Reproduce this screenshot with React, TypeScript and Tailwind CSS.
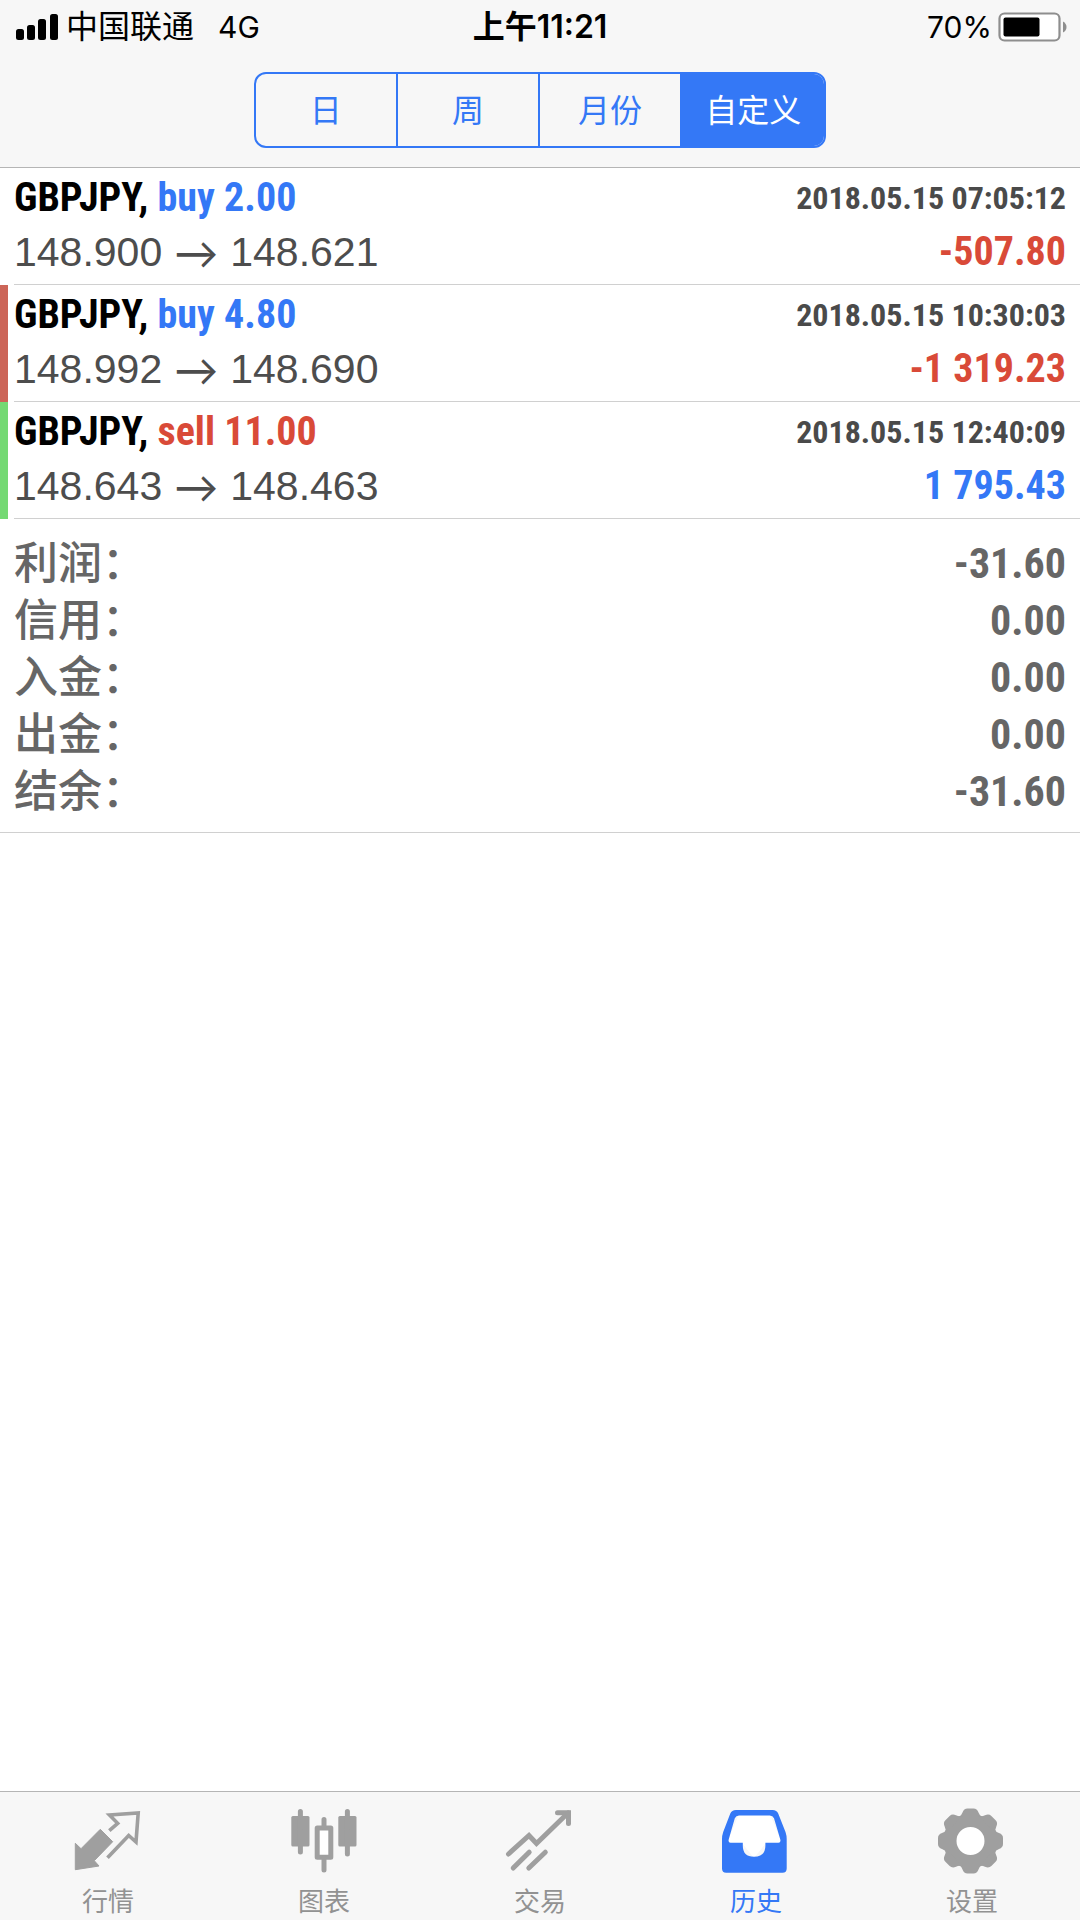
import React, { useState } from 'react';

type Deal = {
  symbol: string;
  side: 'buy' | 'sell';
  volume: string;
  open: string;
  close: string;
  time: string;
  profit: string;
  marker?: 'sl' | 'tp';
};

const deals: Deal[] = [
  { symbol: 'GBPJPY', side: 'buy', volume: '2.00', open: '148.900', close: '148.621', time: '2018.05.15 07:05:12', profit: '-507.80' },
  { symbol: 'GBPJPY', side: 'buy', volume: '4.80', open: '148.992', close: '148.690', time: '2018.05.15 10:30:03', profit: '-1 319.23', marker: 'sl' },
  { symbol: 'GBPJPY', side: 'sell', volume: '11.00', open: '148.643', close: '148.463', time: '2018.05.15 12:40:09', profit: '1 795.43', marker: 'tp' },
];

const summary = [
  { label: '利润', value: '-31.60' },
  { label: '信用', value: '0.00' },
  { label: '入金', value: '0.00' },
  { label: '出金', value: '0.00' },
  { label: '结余', value: '-31.60' },
];

const periods = ['日', '周', '月份', '自定义'];

const narrow = "font-['Roboto_Condensed','Liberation_Sans_Narrow','Noto_Sans_CJK_SC',sans-serif] font-bold";

const QuotesIcon = () => (
  <svg className="w-[72px] h-[66px]" viewBox="0 0 72 66" fill="none" aria-hidden="true">
    <path d="M28.3 21.3L40.7 33.7L22.3 52.7L27 58L3.3 61.7V35.3L9 40.7Z" fill="currentColor" stroke="currentColor" strokeWidth="1" strokeLinejoin="round" />
    <path d="M35.5 49.8L56.7 27.5L64 34L66.2 5L37.5 7L45.7 15.3L37.3 22.7" stroke="currentColor" strokeWidth="3.6" />
  </svg>
);

const ChartIcon = () => (
  <svg className="w-[72px] h-[66px]" viewBox="0 0 72 66" fill="none" aria-hidden="true">
    <g fill="currentColor">
      <rect x="3.3" y="8" width="18.2" height="30.5" rx="1.5" />
      <rect x="50.3" y="8" width="18.2" height="30.5" rx="1.5" />
    </g>
    <rect x="29.2" y="19.9" width="13.6" height="29.4" fill="white" stroke="currentColor" strokeWidth="5" strokeLinejoin="round" />
    <path d="M12.4 3.5V44M59.4 3.5V46M36 11.5V19M36 50V62" stroke="currentColor" strokeWidth="5" strokeLinecap="round" />
  </svg>
);

const TradeIcon = () => (
  <svg className="w-[72px] h-[66px]" viewBox="0 0 72 66" fill="none" stroke="currentColor" strokeWidth="5" strokeLinecap="round" aria-hidden="true">
    <path d="M4.5 46L25 27.5L32.5 35.5L64.2 4.8" />
    <path d="M53.5 4.8H64.5V15.5M9.2 60L25.2 44.2M24.8 60L41.3 44.2" />
  </svg>
);

const HistoryIcon = () => (
  <svg className="w-[72px] h-[66px]" viewBox="0 0 72 66" fill="currentColor" aria-hidden="true">
    <path d="M19 6H50L62 35H46L34 50L22 35H7Z" fill="white" />
    <path
      fillRule="evenodd"
      d="M16 2H52.5Q56.8 2 58.2 5.5L65.5 24Q66.7 27.5 66.7 31V60.5Q66.7 64.7 62.5 64.7H6.2Q2 64.7 2 60.5V31Q2 27.5 3.2 24L10.3 5.5Q11.7 2 16 2ZM19 7.5Q16 7.5 14.8 10.3L8.7 31.5Q8 34.7 10.5 34.7H22.8V37.5Q22.8 48.8 34 48.8Q45.4 48.8 45.4 37.5V34.7H58.5Q61 34.7 60.3 31.5L54 10.3Q52.8 7.5 49.8 7.5Z"
    />
  </svg>
);

const GearIcon = () => (
  <svg className="w-[72px] h-[66px]" viewBox="0 0 72 66" aria-hidden="true">
    <g transform="translate(34.5 33)">
      <circle r="20.5" fill="white" stroke="currentColor" strokeWidth="13" />
      {[0, 45, 90, 135, 180, 225, 270, 315].map((angle) => (
        <path
          key={angle}
          transform={`rotate(${angle})`}
          fill="currentColor"
          d="M-12 -23.5Q-9 -25.5 -8 -28.5Q-6.6 -32.5 -3 -32.5H3Q6.6 -32.5 8 -28.5Q9 -25.5 12 -23.5Z"
        />
      ))}
    </g>
  </svg>
);

const tabs = [
  { label: '行情', Icon: QuotesIcon },
  { label: '图表', Icon: ChartIcon },
  { label: '交易', Icon: TradeIcon },
  { label: '历史', Icon: HistoryIcon },
  { label: '设置', Icon: GearIcon },
];

const StatusBar: React.FC = () => (
  <div className="grid grid-cols-[1fr_auto_1fr] items-center h-[54px] px-4 text-[32px] text-black">
    <div className="flex items-center">
      <svg className="w-[42px] h-[26px]" viewBox="0 0 42 26" aria-hidden="true">
        <rect x="0" y="15" width="8" height="11" rx="2.5" />
        <rect x="11" y="11" width="8" height="15" rx="2.5" />
        <rect x="22" y="5" width="8" height="21" rx="2.5" />
        <rect x="34" y="0" width="8" height="26" rx="2.5" />
      </svg>
      <span className="ml-2">中国联通</span>
      <span className="ml-6 text-[30px]">4G</span>
    </div>
    <div className="font-semibold">上午11:21</div>
    <div className="flex items-center justify-end -mr-1">
      <span className="text-[30px]">70%</span>
      <svg className="ml-1.5 w-[70px] h-[30px]" viewBox="0 0 70 30" aria-hidden="true">
        <rect x="1.5" y="1.5" width="60" height="27" rx="5" fill="white" stroke="#8e8e8e" strokeWidth="2.2" />
        <rect x="5.5" y="5.5" width="36" height="19" rx="2" fill="black" />
        <path d="M65 9.5Q68.5 11.5 68.5 15T65 20.5Z" fill="#8e8e8e" />
      </svg>
    </div>
  </div>
);

const DealRow: React.FC<{ deal: Deal }> = ({ deal }) => {
  const marker = deal.marker === 'sl' ? 'bg-[#cc6558]' : deal.marker === 'tp' ? 'bg-[#74d973]' : 'bg-transparent';
  return (
    <li className="flex">
      <div className={`w-2 shrink-0 ${marker}`} />
      <div className="flex-1 ml-1.5 pr-3.5 pt-[3px] pb-[5px] border-b border-[#d0d0d0]">
        <div className="flex justify-between items-center h-[54px]">
          <div className={`${narrow} text-[40px] leading-[54px] text-black`}>
            {deal.symbol},{' '}
            <span className={deal.side === 'buy' ? 'text-[#3478f6]' : 'text-[#d94a38]'}>
              {deal.side} {deal.volume}
            </span>
          </div>
          <time className={`${narrow} text-[32px] text-[#4a4a4a]`}>{deal.time}</time>
        </div>
        <div className="flex justify-between items-center h-[54px]">
          <div className="flex items-center gap-3 font-['Liberation_Sans',sans-serif] text-[41px] leading-[54px] text-[#4d4d4d]">
            <span>{deal.open}</span>
            <span className="font-['Lato',sans-serif] text-[44px]">→</span>
            <span>{deal.close}</span>
          </div>
          <span className={`${narrow} text-[40px] ${deal.profit.startsWith('-') ? 'text-[#d94a38]' : 'text-[#3478f6]'}`}>
            {deal.profit}
          </span>
        </div>
      </div>
    </li>
  );
};

const App: React.FC = () => {
  const [period, setPeriod] = useState('自定义');
  const [tab, setTab] = useState('历史');

  return (
    <div className="min-h-screen flex flex-col bg-white font-['Inter','Noto_Sans_CJK_SC',sans-serif]">
      <header className="bg-[#f7f7f7] border-b border-[#b5b5b5]">
        <StatusBar />
        <div className="flex justify-center pt-[18px] pb-[19px]">
          <div className="grid grid-cols-4 w-[53%] h-[76px] border-2 border-[#3478f6] rounded-xl overflow-hidden divide-x-2 divide-[#3478f6]">
            {periods.map((p) => (
              <button
                key={p}
                onClick={() => setPeriod(p)}
                className={`pt-0.5 text-[32px] border-[#3478f6] ${p === period ? 'bg-[#3478f6] text-white' : 'text-[#3478f6]'}`}
              >
                {p}
              </button>
            ))}
          </div>
        </div>
      </header>

      <main className="flex-1">
        <ul>
          {deals.map((deal) => (
            <DealRow key={deal.time} deal={deal} />
          ))}
        </ul>
        <dl className="px-3.5 pt-4 pb-3 border-b border-[#d0d0d0] text-[#666666]">
          {summary.map(({ label, value }) => (
            <div key={label} className="flex justify-between items-center h-[57px]">
              <dt className="text-[44px] leading-[57px] font-medium font-['Liberation_Sans','Noto_Sans_CJK_SC',sans-serif]">{label}：</dt>
              <dd className={`${narrow} text-[42px] leading-[57px]`}>{value}</dd>
            </div>
          ))}
        </dl>
      </main>

      <nav className="grid grid-cols-5 bg-[#f7f7f7] border-t border-[#b5b5b5]">
        {tabs.map(({ label, Icon }) => (
          <button
            key={label}
            onClick={() => setTab(label)}
            className={`flex flex-col items-center pt-4 pb-0.5 ${label === tab ? 'text-[#3478f6]' : 'text-[#9f9f9f]'}`}
          >
            <Icon />
            <span className={`mt-3 text-[26px] leading-8 ${label === tab ? '' : 'text-[#929292]'}`}>{label}</span>
          </button>
        ))}
      </nav>
    </div>
  );
};

export default App;
